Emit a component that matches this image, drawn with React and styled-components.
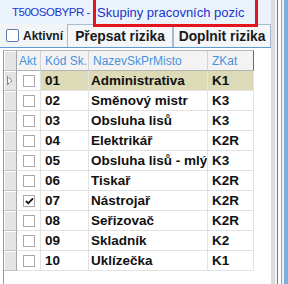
import React from "react";
import styled, { createGlobalStyle } from "styled-components";

const Global = createGlobalStyle`
  html, body {
    margin: 0;
    padding: 0;
    background: #ffffff;
    overflow: hidden;
  }
`;

const rows = [
  { kod: "01", nazev: "Administrativa", zkat: "K1", akt: false },
  { kod: "02", nazev: "Směnový mistr", zkat: "K3", akt: false },
  { kod: "03", nazev: "Obsluha lisů", zkat: "K3", akt: false },
  { kod: "04", nazev: "Elektrikář", zkat: "K2R", akt: false },
  { kod: "05", nazev: "Obsluha lisů - mlýnice", zkat: "K3", akt: false },
  { kod: "06", nazev: "Tiskař", zkat: "K2R", akt: false },
  { kod: "07", nazev: "Nástrojař", zkat: "K2R", akt: true },
  { kod: "08", nazev: "Seřizovač", zkat: "K2R", akt: false },
  { kod: "09", nazev: "Skladník", zkat: "K2", akt: false },
  { kod: "10", nazev: "Uklízečka", zkat: "K1", akt: false },
];

const Window = styled.div`
  display: flex;
  width: 288px;
  height: 284px;
  font-family: "Liberation Sans", Arial, sans-serif;
`;

const Main = styled.div`
  width: 271px;
  display: flex;
  flex-direction: column;
  background: #ffffff;
`;

const Frame = styled.div`
  display: flex;
  width: 17px;
`;

const Strip = styled.div`
  width: ${(p) => p.w}px;
  background: ${(p) => p.c};
`;

const TitleBar = styled.div`
  position: relative;
  height: 24px;
  display: flex;
  align-items: center;
  padding-left: 12px;
  background: #eaf3fc;
  color: #1b34d0;
  white-space: nowrap;
`;

const Code = styled.span`
  font-size: 11.5px;
  letter-spacing: -0.5px;
  width: 85px;
  overflow: hidden;
`;

const Caption = styled.span`
  font-size: 13px;
`;

const RedFrame = styled.div`
  position: absolute;
  left: 93px;
  top: -3px;
  width: 159px;
  height: 24px;
  border: 3px solid #e5131c;
  z-index: 2;
  pointer-events: none;
`;

const Toolbar = styled.div`
  height: 23px;
  display: flex;
  align-items: stretch;
  background: #f2f4f6;
`;

const CheckLabel = styled.label`
  display: flex;
  align-items: center;
  gap: 4px;
  padding-left: 6px;
  width: 62px;
  font-size: 12px;
  font-weight: bold;
  color: #1a1a1a;
`;

const Box = styled.span`
  display: inline-block;
  flex: none;
  box-sizing: border-box;
  width: ${(p) => p.size}px;
  height: ${(p) => p.size}px;
  border: 1px solid ${(p) => p.border};
  background: #ffffff;
  border-radius: ${(p) => p.radius || 0}px;
  position: relative;
`;

const Button = styled.div`
  box-sizing: border-box;
  flex: none;
  width: ${(p) => p.w}px;
  display: flex;
  align-items: center;
  justify-content: center;
  border: 1px solid #a8bcd0;
  border-bottom: none;
  background: #f4f6f8;
  font-size: 13.8px;
  font-weight: bold;
  color: #1a1a1a;
  white-space: nowrap;
`;

const GridArea = styled.div`
  flex: 1;
  border-top: 1px solid #5d9ad6;
  padding-top: 2px;
  padding-left: 3px;
  background: #ffffff;
  display: flex;
`;

const Grid = styled.div`
  display: grid;
  grid-template-columns: 13px 24px 48px 119px 46px;
  grid-auto-rows: 20px;
  align-content: start;
  border-left: 1px solid #9a9a9a;
  border-top: 1px solid #b8b8b8;
`;

const Head = styled.div`
  box-sizing: border-box;
  display: flex;
  align-items: center;
  padding-left: ${(p) => p.pad}px;
  background: #f3f3f3;
  border-right: 1px solid ${(p) => (p.last ? "#6a6a6a" : "#d4d4d4")};
  border-bottom: 1px solid #b4b4b4;
  color: #4892dc;
  font-size: 12px;
  white-space: nowrap;
`;

const Indicator = styled.div`
  box-sizing: border-box;
  display: flex;
  align-items: center;
  justify-content: center;
  background: #e4e4e4;
  border-right: 1px solid #a6a6a6;
  border-bottom: 1px solid #c4c4c4;
  box-shadow: inset 1px 1px 0 #ffffff;
`;

const Cell = styled.div`
  box-sizing: border-box;
  display: flex;
  align-items: center;
  justify-content: ${(p) => (p.center ? "center" : "flex-start")};
  padding-left: ${(p) => (p.center ? 0 : p.pad || 4)}px;
  overflow: hidden;
  white-space: nowrap;
  background: ${(p) => (p.selected ? "#dcdab7" : "#ffffff")};
  border-right: 1px solid #e2e2e2;
  border-bottom: 1px solid #e2e2e2;
  font-size: 13.5px;
  font-weight: bold;
  color: #111111;
`;

function Check() {
  return (
    <svg width="9" height="8" viewBox="0 0 9 8" style={{ position: "absolute", left: 1, top: 1 }}>
      <path d="M1 4 L3.3 6.3 L8 1.4" fill="none" stroke="#111" strokeWidth="1.8" />
    </svg>
  );
}

function Pointer() {
  return (
    <svg width="6" height="9" viewBox="0 0 6 9">
      <path d="M0.5 0.5 L5 4.5 L0.5 8.5 Z" fill="#ffffff" stroke="#222" strokeWidth="1" strokeDasharray="1 1" />
    </svg>
  );
}

export default function App() {
  return (
    <>
      <Global />
      <Window>
        <Main>
          <TitleBar>
            <Code>T50OSOBYPR -</Code>
            <Caption>Skupiny pracovních pozic</Caption>
            <RedFrame />
          </TitleBar>
          <Toolbar>
            <CheckLabel>
              <Box size={13} border="#5c7ea8" radius={2} />
              Aktivní
            </CheckLabel>
            <Button w={106}>Přepsat rizika</Button>
            <Button w={98}>Doplnit rizika</Button>
          </Toolbar>
          <GridArea>
            <Grid>
              <Indicator />
              <Head pad={2}>Akt</Head>
              <Head pad={4}>Kód Sk.</Head>
              <Head pad={4}>NazevSkPrMisto</Head>
              <Head pad={4} last>ZKat</Head>
              {rows.map((r, i) => (
                <React.Fragment key={r.kod}>
                  <Indicator>{i === 0 && <Pointer />}</Indicator>
                  <Cell center>
                    <Box size={12} border="#a9a9a9">
                      {r.akt && <Check />}
                    </Box>
                  </Cell>
                  <Cell selected={i === 0}>{r.kod}</Cell>
                  <Cell selected={i === 0} pad={2}>{r.nazev}</Cell>
                  <Cell selected={i === 0}>{r.zkat}</Cell>
                </React.Fragment>
              ))}
            </Grid>
          </GridArea>
        </Main>
        <Frame>
          <Strip w={4} c="#dcdcdc" />
          <Strip w={2} c="#f4f4f4" />
          <Strip w={1} c="#7a7a7a" />
          <Strip w={3} c="#ffffff" />
          <Strip w={1} c="#a0a0a0" />
          <Strip w={2} c="#f0f0f0" />
          <Strip w={4} c="#79afe0" />
        </Frame>
      </Window>
    </>
  );
}
